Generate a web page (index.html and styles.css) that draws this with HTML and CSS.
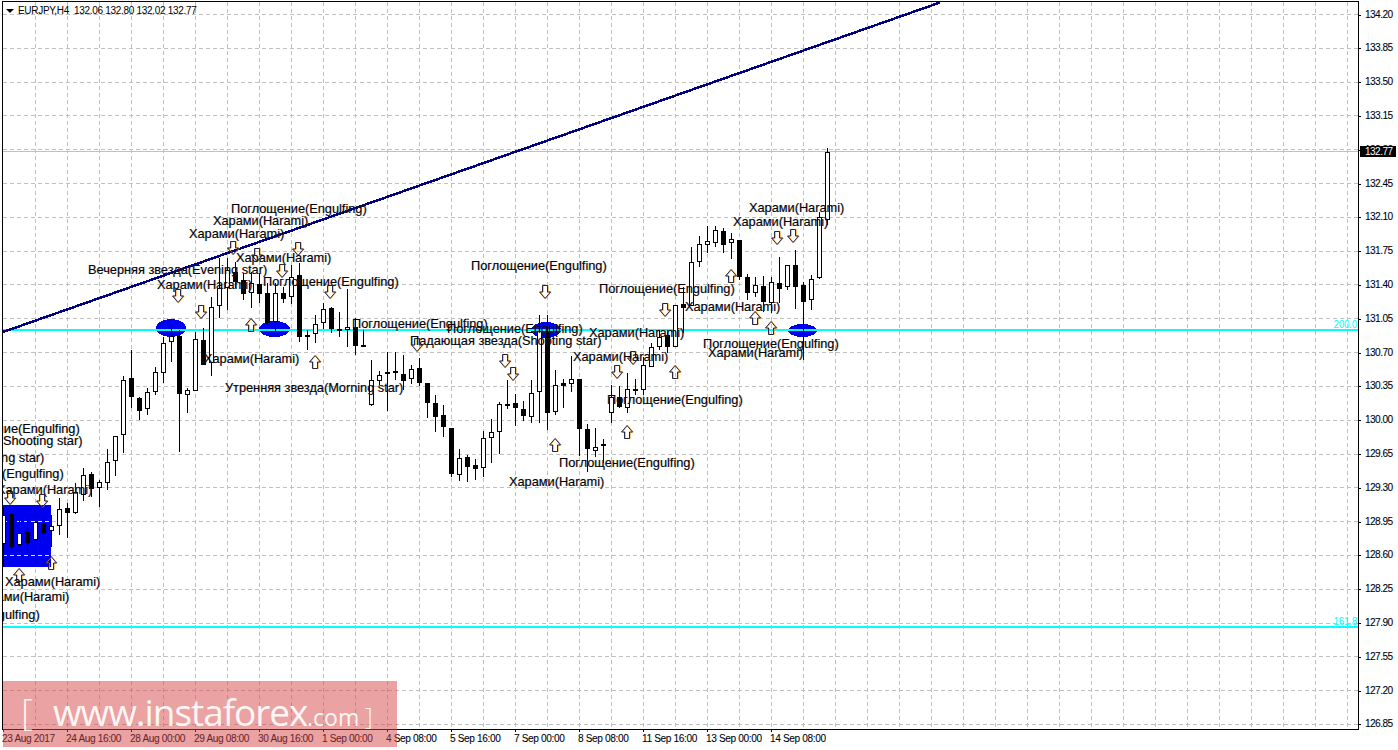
FILE: index.html
```html
<!DOCTYPE html>
<html lang="ru">
<head>
<meta charset="utf-8">
<title>EURJPY,H4</title>
<link rel="stylesheet" href="styles.css">
</head>
<body>
<main class="terminal">
  <div class="upper">
    <section class="plot">
      <svg id="chart" class="chart" width="1356" height="728" viewBox="3 2 1356 728"></svg>
      <div class="symbol"><span class="symbol-mark"></span><span>EURJPY,H4&nbsp; 132.06 132.80 132.02 132.77</span></div>
      <div class="labels">
        <span class="pat" style="left:231px;top:202px">Поглощение(Engulfing)</span>
        <span class="pat" style="left:213px;top:214px">Харами(Harami)</span>
        <span class="pat" style="left:189px;top:227px">Харами(Harami)</span>
        <span class="pat" style="left:236px;top:251px">Харами(Harami)</span>
        <span class="pat" style="left:88px;top:263px">Вечерняя звезда(Evening star)</span>
        <span class="pat" style="left:263px;top:275px">Поглощение(Engulfing)</span>
        <span class="pat" style="left:157px;top:278px">Харами(Harami)</span>
        <span class="pat" style="left:352px;top:317px">Поглощение(Engulfing)</span>
        <span class="pat" style="left:447px;top:322px">Поглощение(Engulfing)</span>
        <span class="pat" style="left:410px;top:334px">Падающая звезда(Shooting star)</span>
        <span class="pat" style="left:204px;top:352px">Харами(Harami)</span>
        <span class="pat" style="left:225px;top:381px">Утренняя звезда(Morning star)</span>
        <span class="pat" style="left:471px;top:259px">Поглощение(Engulfing)</span>
        <span class="pat" style="left:599px;top:282px">Поглощение(Engulfing)</span>
        <span class="pat" style="left:685px;top:300px">Харами(Harami)</span>
        <span class="pat" style="left:589px;top:326px">Харами(Harami)</span>
        <span class="pat" style="left:573px;top:350px">Харами(Harami)</span>
        <span class="pat" style="left:607px;top:393px">Поглощение(Engulfing)</span>
        <span class="pat" style="left:559px;top:456px">Поглощение(Engulfing)</span>
        <span class="pat" style="left:509px;top:475px">Харами(Harami)</span>
        <span class="pat" style="left:703px;top:337px">Поглощение(Engulfing)</span>
        <span class="pat" style="left:708px;top:346px">Харами(Harami)</span>
        <span class="pat" style="left:749px;top:201px">Харами(Harami)</span>
        <span class="pat" style="left:733px;top:215px">Харами(Harami)</span>
        <span class="pat" style="left:-56px;top:422px">Поглощение(Engulfing)</span>
        <span class="pat" style="left:-109px;top:434px">Падающая звезда(Shooting star)</span>
        <span class="pat" style="left:-134px;top:451px">Утренняя звезда(Morning star)</span>
        <span class="pat" style="left:-72px;top:467px">Поглощение(Engulfing)</span>
        <span class="pat" style="left:-3px;top:483px">Харами(Harami)</span>
        <span class="pat" style="left:5px;top:575px">Харами(Harami)</span>
        <span class="pat" style="left:-26px;top:590px">Харами(Harami)</span>
        <span class="pat" style="left:-96px;top:608px">Поглощение(Engulfing)</span>
        <span class="fib" style="top:319px">200.0</span>
        <span class="fib" style="top:616px">161.8</span>
      </div>
    </section>
    <aside class="price-axis">
      <span class="price">134.20</span><span class="price">133.85</span><span class="price">133.50</span><span class="price">133.15</span><span class="price">132.80</span><span class="price">132.45</span><span class="price">132.10</span><span class="price">131.75</span><span class="price">131.40</span><span class="price">131.05</span><span class="price">130.70</span><span class="price">130.35</span><span class="price">130.00</span><span class="price">129.65</span><span class="price">129.30</span><span class="price">128.95</span><span class="price">128.60</span><span class="price">128.25</span><span class="price">127.90</span><span class="price">127.55</span><span class="price">127.20</span><span class="price">126.85</span>
      <span class="current">132.77</span>
    </aside>
  </div>
  <div class="time-axis">
    <span class="time">23 Aug 2017</span><span class="time">24 Aug 16:00</span><span class="time">28 Aug 00:00</span><span class="time">29 Aug 08:00</span><span class="time">30 Aug 16:00</span><span class="time">1 Sep 00:00</span><span class="time">4 Sep 08:00</span><span class="time">5 Sep 16:00</span><span class="time">7 Sep 00:00</span><span class="time">8 Sep 08:00</span><span class="time">11 Sep 16:00</span><span class="time">13 Sep 00:00</span><span class="time">14 Sep 08:00</span>
  </div>
  <div class="watermark">
    <span class="wm-open">[</span>
    <span class="wm-main">www.instaforex</span><span class="wm-com">.com</span>
    <span class="wm-close">]</span>
  </div>
</main>
<script src="chart.js"></script>
</body>
</html>
```
FILE: styles.css
```css
* { box-sizing: border-box; }
html, body { margin: 0; padding: 0; background: #fff; }
body { font-family: "Liberation Sans", Arial, sans-serif; color: #000; }

.terminal {
  position: relative;
  width: 1398px;
  height: 750px;
  overflow: hidden;
  padding: 1px 0 0 2px;
}
.upper { display: flex; align-items: flex-start; }

.plot {
  position: relative;
  width: 1357px;
  height: 729px;
  border: 1px solid #000;
  overflow: hidden;
  background: #fff;
}
.chart { display: block; }

.symbol {
  position: absolute;
  left: 3px;
  top: 2px;
  display: flex;
  align-items: center;
  gap: 4px;
  font-size: 10px;
  line-height: 14px;
  letter-spacing: -0.3px;
  white-space: pre;
}
.symbol-mark {
  width: 0;
  height: 0;
  border-left: 4px solid transparent;
  border-right: 4px solid transparent;
  border-top: 4px solid #000;
}

.labels { position: absolute; left: -3px; top: -2px; width: 1398px; height: 750px; }
.pat {
  position: absolute;
  font-size: 12.75px;
  line-height: 14px;
  white-space: nowrap;
  color: #000;
  text-shadow: 0.5px 0 rgba(0, 110, 230, 0.35), -0.5px 0 rgba(240, 140, 30, 0.35);
}
.fib {
  position: absolute;
  right: 41px;
  font-size: 10px;
  line-height: 12px;
  letter-spacing: -0.3px;
  color: #00ffff;
}

.price-axis {
  position: relative;
  width: 39px;
  height: 729px;
  display: flex;
  flex-direction: column;
  padding-top: 6.6px;
}
.price {
  position: relative;
  flex: 0 0 33.81px;
  height: 33.81px;
  padding-left: 6px;
  font-size: 10px;
  line-height: 14px;
  letter-spacing: -0.5px;
  text-shadow: 0.4px 0 rgba(0, 110, 230, 0.3);
}
.price::before {
  content: "";
  position: absolute;
  left: 0;
  top: 7px;
  width: 2px;
  height: 1px;
  background: #000;
}
.current {
  position: absolute;
  left: 1px;
  top: 145px;
  width: 36px;
  height: 11px;
  padding-left: 5px;
  background: #000;
  color: #fff;
  font-size: 10px;
  line-height: 11px;
  letter-spacing: -0.5px;
}

.time-axis {
  display: flex;
  margin-left: 1px;
  height: 20px;
}
.time {
  position: relative;
  flex: 0 0 64px;
  padding-top: 2px;
  font-size: 10px;
  line-height: 14px;
  letter-spacing: -0.32px;
  text-indent: -1px;
  white-space: nowrap;
  text-shadow: 0.4px 0 rgba(0, 110, 230, 0.3);
}
.time::before {
  content: "";
  position: absolute;
  left: 0;
  top: -1px;
  width: 1px;
  height: 3px;
  background: #000;
}

.watermark {
  position: absolute;
  left: 3px;
  top: 681px;
  width: 394px;
  height: 66px;
  background: rgba(215, 70, 70, 0.5);
  color: rgba(255, 255, 255, 0.92);
  font-family: "Open Sans", sans-serif;
  font-weight: 400;
  white-space: nowrap;
}
.watermark span { position: absolute; line-height: 1; }
.wm-open { left: 18px; top: 11px; font-size: 37px; font-weight: 300; }
.wm-main { left: 50px; top: 12px; font-size: 37px; letter-spacing: -1.05px; }
.wm-com { left: 304px; top: 25px; font-size: 23px; }
.wm-close { left: 362px; top: 23px; font-size: 24px; font-weight: 300; }
```
FILE: chart.js
```js
var NS = "http://www.w3.org/2000/svg";
var svg = document.getElementById("chart");

function add(tag, attrs, parent) {
  var el = document.createElementNS(NS, tag);
  for (var k in attrs) el.setAttribute(k, attrs[k]);
  (parent || svg).appendChild(el);
  return el;
}

var crisp = add("g", { "shape-rendering": "crispEdges" });

// grid
var i;
for (i = 0; i < 22; i++) {
  var gy = Math.round(14 + 33.81 * i) + 0.5;
  add("line", { x1: 3, x2: 1358, y1: gy, y2: gy, stroke: "#c0c0c0", "stroke-dasharray": "4 3" }, crisp);
}
for (i = 0; i < 42; i++) {
  var gx = 35 + 32 * i + 0.5;
  add("line", { x1: gx, x2: gx, y1: 2, y2: 729, stroke: "#c0c0c0", "stroke-dasharray": "4 3" }, crisp);
}

// current price line
add("line", { x1: 3, x2: 1358, y1: 151.5, y2: 151.5, stroke: "#c0c0c0" }, crisp);

// pattern highlights
add("rect", { x: 3, y: 505, width: 48, height: 62, fill: "#0000f0" }, crisp);
[521.5, 555.5].forEach(function (y) {
  add("line", { x1: 3, x2: 51, y1: y, y2: y, stroke: "#d8d8ff", "stroke-dasharray": "4 3" }, crisp);
});
[[171, 328, 15, 9], [274.5, 329, 15.5, 8], [546, 330, 15, 8], [802.5, 330.5, 14.5, 6.5]].forEach(function (e) {
  add("ellipse", { cx: e[0], cy: e[1], rx: e[2], ry: e[3], fill: "#0000f0" }, crisp);
});

// candles: high, body top, body bottom, low, u(p)/d(own); spaced 8px from x=3
var candles = [
  [508,515,544,567,"u"],[512,514,547,553,"d"],[520,533,545,553,"u"],[514,532,543,555,"d"],
  [522,522,540,562,"u"],[522,523,533,538,"d"],[515,526,531,547,"u"],[498,509,526,535,"u"],
  [503,508,513,538,"d"],[483,492,513,514,"u"],[468,475,495,501,"u"],[472,474,489,497,"d"],
  [480,482,488,507,"u"],[449,462,483,490,"u"],[436,436,461,476,"u"],[376,380,435,453,"u"],
  [350,378,397,408,"d"],[397,398,411,420,"d"],[388,392,409,415,"u"],[367,372,392,395,"u"],
  [337,343,373,383,"u"],[324,336,342,362,"u"],[330,336,394,452,"d"],[388,390,395,413,"u"],
  [332,339,391,391,"u"],[328,340,365,365,"d"],[297,307,363,376,"u"],[258,288,306,318,"u"],
  [258,270,288,310,"u"],[262,272,282,288,"d"],[273,280,294,300,"d"],[272,283,293,308,"u"],
  [273,284,294,303,"d"],[283,293,323,325,"d"],[283,293,322,332,"u"],[287,293,299,303,"d"],
  [265,277,297,304,"u"],[263,275,337,342,"d"],[330,335,337,350,"u"],[315,324,334,343,"u"],
  [303,309,323,329,"u"],[307,308,329,333,"d"],[312,329,331,337,"d"],[289,327,330,347,"u"],
  [318,327,346,355,"d"],[330,345,347,347,"d"],[360,380,405,406,"u"],[371,375,381,385,"u"],
  [352,372,374,411,"u"],[352,371,373,380,"d"],[355,374,381,390,"d"],[365,369,379,384,"u"],
  [358,368,383,386,"d"],[383,383,403,418,"d"],[395,403,417,432,"d"],[405,415,427,437,"d"],
  [428,428,474,477,"d"],[449,458,475,481,"u"],[455,457,467,482,"d"],[459,465,469,480,"d"],
  [431,438,468,477,"u"],[419,432,438,463,"u"],[402,404,432,454,"u"],[380,404,406,409,"d"],
  [394,403,408,426,"d"],[401,409,416,421,"d"],[380,393,417,423,"u"],[315,331,392,423,"u"],
  [315,331,413,430,"d"],[370,385,412,415,"u"],[379,383,386,408,"d"],[356,379,384,392,"u"],
  [379,379,429,456,"d"],[424,429,449,472,"d"],[428,447,451,457,"u"],[439,444,445,463,"d"],
  [385,397,413,423,"u"],[386,397,407,408,"d"],[373,389,408,413,"u"],[379,389,391,395,"d"],
  [357,365,390,395,"u"],[343,347,367,367,"u"],[330,337,347,350,"u"],[330,335,347,353,"d"],
  [305,305,347,347,"u"],[287,304,308,333,"d"],[247,262,306,306,"u"],[236,244,262,267,"u"],
  [226,241,245,253,"u"],[226,230,243,247,"u"],[228,231,245,253,"d"],[233,239,243,259,"u"],
  [240,240,277,280,"d"],[274,277,293,300,"d"],[277,285,293,297,"u"],[276,286,302,312,"d"],
  [277,282,303,313,"u"],[257,283,289,303,"d"],[265,265,287,290,"u"],[250,265,287,309,"d"],
  [282,285,302,360,"d"],[275,279,300,310,"u"],[212,217,278,279,"u"],[148,152,220,225,"u"]
];
var cg = add("g", { "shape-rendering": "crispEdges" });
candles.forEach(function (c, idx) {
  var x = 3 + 8 * idx;
  add("rect", { x: x, y: c[0], width: 1, height: c[3] - c[0], fill: "#000" }, cg);
  if (c[4] === "d") {
    add("rect", { x: x - 2, y: c[1], width: 5, height: Math.max(c[2] - c[1], 2), fill: "#000" }, cg);
  } else {
    add("rect", { x: x - 1.5, y: c[1] + 0.5, width: 4, height: Math.max(c[2] - c[1] - 1, 1), fill: "#fff", stroke: "#000" }, cg);
  }
});

// fibonacci levels
add("rect", { x: 3, y: 329, width: 1355, height: 2, fill: "#00ffff" }, crisp);
add("rect", { x: 3, y: 626, width: 1355, height: 2, fill: "#00ffff" }, crisp);

// trend line
add("line", { x1: 3, y1: 332, x2: 940, y2: 2.5, stroke: "#000080", "stroke-width": 2.5, "shape-rendering": "crispEdges" });

// arrows
var DOWN = "M-2.5-6.5H2.5V0H5.5L0 6.5-5.5 0H-2.5Z";
var UP = "M-2.5 6.5H2.5V0H5.5L0-6.5-5.5 0H-2.5Z";
var ag = add("g", { fill: "none" });
function arrow(x, y, d) {
  add("path", { d: d, transform: "translate(" + (x + 0.7) + " " + y + ")", stroke: "#f39a1e", "stroke-width": 0.9 }, ag);
  add("path", { d: d, transform: "translate(" + x + " " + y + ")", stroke: "#14143c", "stroke-width": 0.9 }, ag);
}
[[178,296],[201,312],[282,271],[330,292],[417,345],[233,248],[257,255],[298,249],[10,498],[42,501],
 [545,292],[505,361],[513,374],[617,372],[665,310],[633,358],[777,238],[793,236]].forEach(function (a) { arrow(a[0], a[1], DOWN); });
[[251,325],[315,362],[51,563],[19,575],[555,445],[627,432],[675,372],[731,276],[755,318],[771,328]].forEach(function (a) { arrow(a[0], a[1], UP); });
```
